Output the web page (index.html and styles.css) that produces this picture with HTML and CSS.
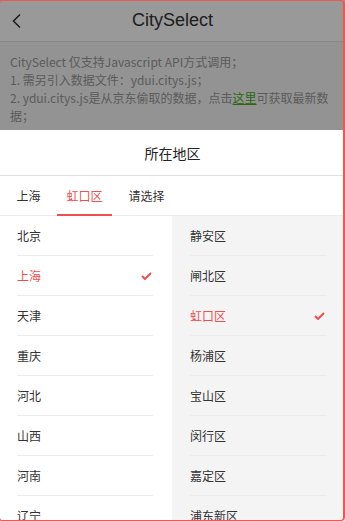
FILE: index.html
```html
<!DOCTYPE html>
<html lang="zh-CN">
<head>
    <meta charset="UTF-8">
    <meta name="viewport" content="width=device-width, initial-scale=1.0">
    <title>CitySelect</title>
    <link rel="stylesheet" href="styles.css">
</head>
<body>
    <div class="page">
        <header class="navbar">
            <a class="navbar-back" href="#">
                <svg width="12" height="16" viewBox="0 0 12 16"><path d="M9 1.5 L2.5 8 L9 14.5" fill="none" stroke="#333" stroke-width="1.6"/></svg>
            </a>
            <h1 class="navbar-title">CitySelect</h1>
        </header>

        <div class="intro">
            CitySelect 仅支持Javascript API方式调用；<br>
            1. 需另引入数据文件：ydui.citys.js；<br>
            2. ydui.citys.js是从京东偷取的数据，点击<a href="#">这里</a>可获取最新数据；
        </div>
    </div>

    <div class="mask"></div>

    <div class="cityselect">
        <div class="cs-title">所在地区</div>
        <div class="cs-tabs">
            <a class="cs-tab">上海</a>
            <a class="cs-tab active">虹口区</a>
            <a class="cs-tab">请选择</a>
        </div>
        <div class="cs-body">
            <ul class="cs-col">
                <li><span>北京</span></li>
                <li class="checked"><span>上海</span><i class="cs-check"></i></li>
                <li><span>天津</span></li>
                <li><span>重庆</span></li>
                <li><span>河北</span></li>
                <li><span>山西</span></li>
                <li><span>河南</span></li>
                <li><span>辽宁</span></li>
            </ul>
            <ul class="cs-col cs-col-sub">
                <li><span>静安区</span></li>
                <li><span>闸北区</span></li>
                <li class="checked"><span>虹口区</span><i class="cs-check"></i></li>
                <li><span>杨浦区</span></li>
                <li><span>宝山区</span></li>
                <li><span>闵行区</span></li>
                <li><span>嘉定区</span></li>
                <li><span>浦东新区</span></li>
            </ul>
        </div>
    </div>

    <div class="frame"></div>
</body>
</html>
```

FILE: styles.css
```css
* {
    box-sizing: border-box;
}
body {
    margin: 0;
    padding: 0;
    height: 521px;
    overflow: hidden;
    background-color: #f5f5f5;
    font-family: "Noto Sans CJK SC", sans-serif;
    color: #333;
}
ul {
    margin: 0;
    padding: 0;
    list-style: none;
}
.navbar {
    height: 42px;
    background-color: #fff;
    border-bottom: 1px solid #e2e2e2;
    display: flex;
    align-items: center;
    justify-content: center;
    position: relative;
}
.navbar-back {
    position: absolute;
    left: 11px;
    top: 13px;
    display: flex;
}
.navbar-title {
    margin: 0;
    font-family: "Liberation Sans", Arial, sans-serif;
    font-size: 18px;
    font-weight: normal;
    color: #333;
}
.intro {
    padding: 11px 10px;
    font-size: 12px;
    line-height: 18px;
    color: #999;
}
.intro a {
    color: #4cae14;
}
.mask {
    position: fixed;
    left: 0;
    top: 0;
    right: 0;
    bottom: 0;
    background-color: rgba(0, 0, 0, 0.4);
}
.cityselect {
    position: fixed;
    left: 0;
    right: 0;
    bottom: 0;
    height: 391px;
    background-color: #fff;
    display: flex;
    flex-direction: column;
}
.cs-title {
    height: 46px;
    flex-shrink: 0;
    border-bottom: 1px solid #e0e0e0;
    display: flex;
    align-items: center;
    justify-content: center;
    font-size: 14px;
    color: #222;
}
.cs-tabs {
    height: 40px;
    flex-shrink: 0;
    border-bottom: 1px solid #ececec;
    display: flex;
    padding-left: 7px;
}
.cs-tab {
    padding: 0 9.5px;
    margin-right: 7px;
    font-size: 12px;
    line-height: 39px;
    color: #333;
    position: relative;
}
.cs-tab.active {
    color: #ef4f4f;
}
.cs-tab.active::after {
    content: "";
    position: absolute;
    left: 0;
    right: 0;
    bottom: -1px;
    height: 2px;
    background-color: #ef4f4f;
}
.cs-body {
    flex: 1;
    display: grid;
    grid-template-columns: 172px 1fr;
    overflow: hidden;
}
.cs-col {
    padding: 0 19px 0 17px;
}
.cs-col-sub {
    background-color: #f4f4f4;
    padding-left: 18px;
}
.cs-col li {
    height: 40px;
    border-bottom: 1px solid #ececec;
    display: flex;
    align-items: center;
    justify-content: space-between;
    font-size: 12px;
    color: #333;
}
.cs-col li.checked {
    color: #ef4f4f;
}
.cs-check {
    width: 11px;
    height: 8px;
    margin-right: 1px;
    background: no-repeat center / 11px 8px url("data:image/svg+xml;utf8,<svg xmlns='http://www.w3.org/2000/svg' viewBox='0 0 11 8'><path d='M1 4 L4 7 L10 1' fill='none' stroke='%23ef4f4f' stroke-width='2'/></svg>");
}
.frame {
    position: fixed;
    left: -2px;
    top: 0;
    right: 0;
    bottom: 0;
    border: 2px solid #ea5a50;
    border-top-width: 1px;
    border-bottom-width: 1px;
    border-radius: 4px;
    pointer-events: none;
}
```
